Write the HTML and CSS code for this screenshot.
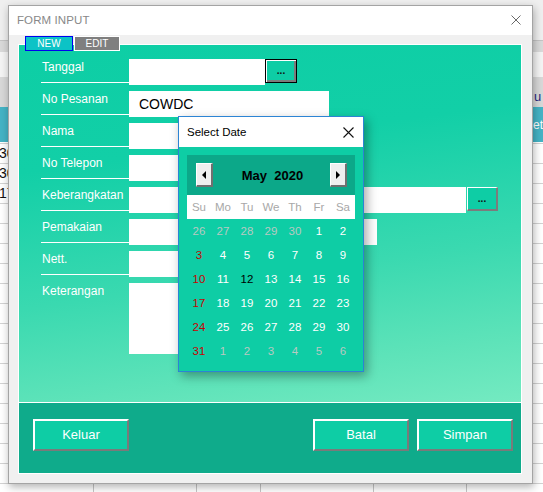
FILE: index.html
```html
<!DOCTYPE html>
<html>
<head>
<meta charset="utf-8">
<title>Form Input</title>
<link rel="stylesheet" href="styles.css">
</head>
<body>
<div class="sheet">
  <div class="band b1"></div>
  <div class="band b2"></div>
  <div class="band b3"></div>
  <div class="band b4"><span class="rt-u">u</span></div>
  <div class="band b5"><span class="rt-et">et</span></div>
  <div class="grid">
    <div class="grow">30</div>
    <div class="grow">30</div>
    <div class="grow">17</div>
  </div>
</div>

<div class="window">
  <div class="titlebar">
    <span class="title">FORM INPUT</span>
    <svg class="close" width="10" height="10" viewBox="0 0 10 10"><path d="M0.5 0.5 L9.5 9.5 M9.5 0.5 L0.5 9.5" stroke="#6a6a6a" stroke-width="1" fill="none"/></svg>
  </div>
  <div class="wbody">
    <div class="tabs">
      <div class="tab tab-new">NEW</div>
      <div class="tab tab-edit"><span>EDIT</span></div>
    </div>
    <div class="panel">
      <div class="form">
        <div class="row">
          <div class="label">Tanggal</div>
          <div class="field w136"></div>
          <div class="dots dots-focus">...</div>
        </div>
        <div class="row">
          <div class="label">No Pesanan</div>
          <div class="field w200"><span class="val">COWDC</span></div>
        </div>
        <div class="row">
          <div class="label">Nama</div>
          <div class="field w200"></div>
        </div>
        <div class="row">
          <div class="label">No Telepon</div>
          <div class="field w200"></div>
        </div>
        <div class="row">
          <div class="label">Keberangkatan</div>
          <div class="field w337"></div>
          <div class="dots">...</div>
        </div>
        <div class="row">
          <div class="label">Pemakaian</div>
          <div class="field w248"></div>
        </div>
        <div class="row">
          <div class="label">Nett.</div>
          <div class="field w200"></div>
        </div>
        <div class="row">
          <div class="label nol">Keterangan</div>
          <div class="field w200 tall"></div>
        </div>
      </div>
      <div class="footer">
        <div class="btn">Keluar</div>
        <div class="spacer"></div>
        <div class="btn">Batal</div>
        <div class="btn">Simpan</div>
      </div>
    </div>
  </div>

  <div class="calendar">
    <div class="cal-title">
      <span>Select Date</span>
      <svg width="11" height="11" viewBox="0 0 11 11"><path d="M0.5 0.5 L10.5 10.5 M10.5 0.5 L0.5 10.5" stroke="#111" stroke-width="1.1" fill="none"/></svg>
    </div>
    <div class="cal-body">
      <div class="cal-head">
        <div class="nav"><span class="tri-l"></span></div>
        <div class="month">May  2020</div>
        <div class="nav"><span class="tri-r"></span></div>
      </div>
      <div class="wdays">
        <span>Su</span><span>Mo</span><span>Tu</span><span>We</span><span>Th</span><span>Fr</span><span>Sa</span>
      </div>
      <div class="days">
        <span class="o">26</span><span class="o">27</span><span class="o">28</span><span class="o">29</span><span class="o">30</span><span>1</span><span>2</span>
        <span class="s">3</span><span>4</span><span>5</span><span>6</span><span>7</span><span>8</span><span>9</span>
        <span class="s">10</span><span>11</span><span class="t">12</span><span>13</span><span>14</span><span>15</span><span>16</span>
        <span class="s">17</span><span>18</span><span>19</span><span>20</span><span>21</span><span>22</span><span>23</span>
        <span class="s">24</span><span>25</span><span>26</span><span>27</span><span>28</span><span>29</span><span>30</span>
        <span class="s">31</span><span class="o">1</span><span class="o">2</span><span class="o">3</span><span class="o">4</span><span class="o">5</span><span class="o">6</span>
      </div>
    </div>
  </div>
</div>
</body>
</html>
```

FILE: styles.css
```css
* { box-sizing: border-box; }
html, body { margin: 0; padding: 0; }
body {
  width: 543px;
  height: 492px;
  overflow: hidden;
  position: relative;
  background: #fff;
  font-family: "Liberation Sans", Arial, sans-serif;
}

/* background spreadsheet */
.sheet {
  position: absolute;
  left: 0;
  top: 0;
  width: 543px;
  height: 492px;
  overflow: hidden;
}
.band {
  display: flex;
  align-items: center;
  white-space: nowrap;
  overflow: hidden;
  font-size: 13px;
}
.b1 { height: 40px; background: #efefef; }
.b2 { height: 12px; background: #d9d9d9; border-top: 1px solid #c4c4c4; }
.b3 { height: 25px; background: #f4f4f4; }
.b4 { height: 30px; background: #d8d8d8; color: #2a2a80; align-items: flex-end; padding-bottom: 3px; }
.b5 { height: 35px; background: #45b3c5; color: #fff; font-size: 12px; }
.rt-u { margin-left: 534px; }
.rt-et { margin-left: 533px; }
.grid {
  height: 350px;
  background-color: #fff;
  background-image:
    linear-gradient(90deg, transparent 93px, #c6c6c6 93px, #c6c6c6 94px, transparent 94px),
    linear-gradient(90deg, transparent 196px, #c6c6c6 196px, #c6c6c6 197px, transparent 197px),
    linear-gradient(90deg, transparent 260px, #c6c6c6 260px, #c6c6c6 261px, transparent 261px),
    linear-gradient(90deg, transparent 373px, #c6c6c6 373px, #c6c6c6 374px, transparent 374px),
    linear-gradient(90deg, transparent 466px, #c6c6c6 466px, #c6c6c6 467px, transparent 467px),
    linear-gradient(180deg, transparent 19px, #d2d2d2 19px);
  background-size: 100% 100%, 100% 100%, 100% 100%, 100% 100%, 100% 100%, 100% 20px;
  background-position: 0 0, 0 0, 0 0, 0 0, 0 0, 0 2px;
  background-repeat: no-repeat, no-repeat, no-repeat, no-repeat, no-repeat, repeat;
  padding-top: 1px;
}
.grow {
  height: 20px;
  line-height: 20px;
  font-size: 14px;
  color: #111;
  margin-left: -1px;
}

/* window */
.window {
  position: absolute;
  left: 8px;
  top: 5px;
  width: 525px;
  height: 479px;
  border: 1px solid #a4a4a4;
  background: #f0f0f0;
  box-shadow: 1px 3px 8px rgba(0, 0, 0, 0.3);
}
.titlebar {
  height: 29px;
  background: #fff;
  display: flex;
  align-items: center;
  justify-content: space-between;
  padding: 0 11px 2px 8px;
}
.title {
  font-size: 11.5px;
  color: #888;
  letter-spacing: 0.1px;
}
.close { display: block; }

.wbody {
  padding: 1px 10px 0 9px;
}
.tabs {
  display: flex;
  height: 15px;
  margin-left: 7px;
  position: relative;
  z-index: 2;
}
.tab {
  height: 15px;
  font-size: 10px;
  line-height: 13px;
  color: #fff;
  text-align: center;
}
.tab-new {
  width: 48px;
  background: #0cc3c6;
  border: 1px solid #0000f0;
}
.tab-edit {
  width: 46px;
  margin-left: 1px;
  background-color: #7f7f7f;
  background-image: radial-gradient(#989898 0.6px, transparent 0.7px);
  background-size: 4px 4px;
  border: 1px solid #fff;
}
.tab-edit span {
  background: #7f7f7f;
  padding: 0 1px;
}

.panel {
  margin-top: -7px;
  height: 430px;
  border: 1px solid #fff;
  display: flex;
  flex-direction: column;
}
.form {
  height: 358px;
  border-bottom: 1px solid #fff;
  padding: 8px 0 0 22px;
  background: linear-gradient(172deg, #0dcea5 0%, #12cfa7 30%, #3ad9b0 62%, #5ee3b9 85%, #74eac1 100%);
}
.row {
  display: flex;
  height: 32px;
  align-items: flex-start;
}
.label {
  width: 88px;
  height: 30px;
  border-bottom: 1px solid #fff;
  line-height: 28px;
  padding-left: 1px;
  font-size: 12px;
  color: #fff;
}
.label.nol { border-bottom: none; }
.field {
  margin-top: 6px;
  height: 26px;
  background: #fff;
}
.field.tall { height: 71px; }
.w136 { width: 136px; }
.w200 { width: 200px; }
.w248 { width: 248px; }
.w337 { width: 337px; }
.val {
  display: block;
  padding-left: 10px;
  line-height: 26px;
  font-size: 14px;
  color: #000;
}
.dots {
  margin-top: 6px;
  width: 31px;
  height: 24px;
  margin-left: 1px;
  background: #0ecda5;
  border-style: solid;
  border-width: 1px 2px 2px 1px;
  border-color: #fff #7c7c7c #7c7c7c #fff;
  font-size: 10px;
  font-weight: bold;
  line-height: 22px;
  text-align: center;
  color: #111;
}
.dots-focus {
  margin-left: 0;
  width: 32px;
  border: 1px solid #000;
  box-shadow: inset 1px 1px 0 #fff, inset -2px -2px 0 #7c7c7c;
  line-height: 22px;
}

.footer {
  flex: 1;
  background-color: #0fab8b;
  display: flex;
  align-items: flex-start;
  padding: 16px 8px 0 14px;
  gap: 8px;
}
.spacer { flex: 1; }
.btn {
  width: 96px;
  height: 32px;
  background: #0ecda5;
  border-style: solid;
  border-width: 2px;
  border-color: #fff #7a7a7a #7a7a7a #fff;
  color: #fff;
  font-size: 13px;
  line-height: 28px;
  text-align: center;
}

/* calendar popup */
.calendar {
  position: absolute;
  left: 169px;
  top: 110px;
  width: 186px;
  height: 256px;
  border: 1px solid #2c84d4;
  background: #0ecda5;
  box-shadow: 3px 4px 10px rgba(0, 0, 0, 0.35);
  z-index: 5;
}
.cal-title {
  height: 30px;
  background: #fff;
  display: flex;
  align-items: center;
  justify-content: space-between;
  padding: 0 9px 0 8px;
  font-size: 11.5px;
  color: #000;
}
.cal-title svg { display: block; }
.cal-body {
  padding: 8px;
}
.cal-head {
  height: 40px;
  background: #0ca889;
  display: flex;
  align-items: center;
  justify-content: space-between;
  padding: 0 8px 0 9px;
}
.nav {
  width: 17px;
  height: 24px;
  background: #efefef;
  border-style: solid;
  border-width: 1px 2px 2px 1px;
  border-color: #fff #707070 #707070 #fff;
  display: flex;
  align-items: center;
  justify-content: center;
}
.tri-l, .tri-r {
  width: 0;
  height: 0;
  border-top: 4px solid transparent;
  border-bottom: 4px solid transparent;
}
.tri-l { border-right: 4px solid #000; }
.tri-r { border-left: 4px solid #000; }
.month {
  font-size: 13px;
  font-weight: bold;
  color: #000;
  white-space: pre;
  padding-left: 2px;
}
.wdays, .days {
  display: grid;
  grid-template-columns: repeat(7, 24px);
  grid-auto-rows: 24px;
}
.wdays {
  background: #fff;
  color: #a8a8a8;
  font-size: 11.5px;
}
.wdays span, .days span {
  display: flex;
  align-items: center;
  justify-content: center;
}
.days {
  font-size: 11.5px;
  color: #fff;
}
.days .o { color: #b9c9c2; }
.days .s { color: #c80000; }
.days .t { color: #000; }
```
